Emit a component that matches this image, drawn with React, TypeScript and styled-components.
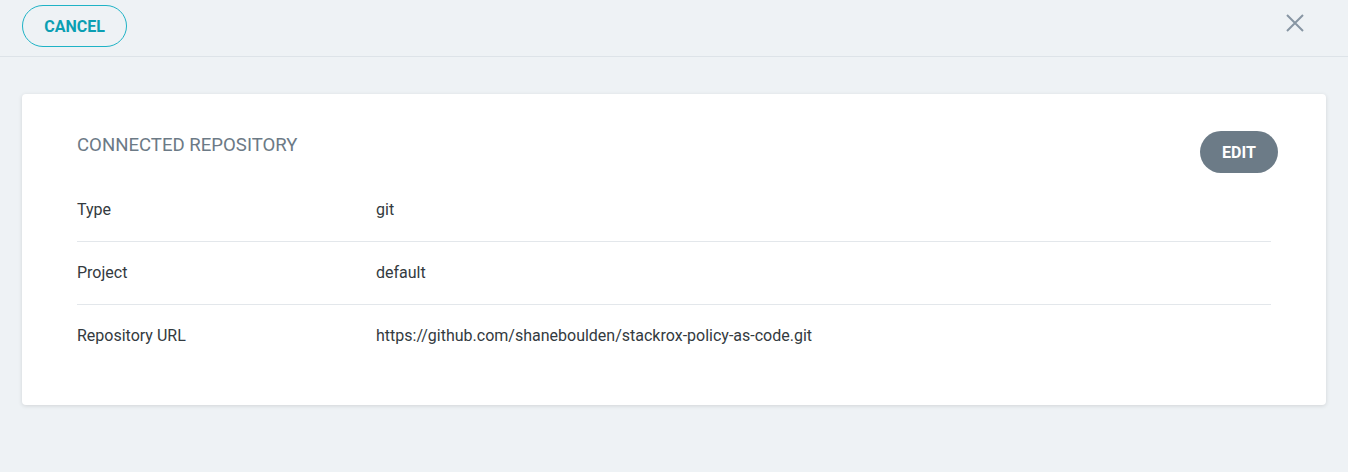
import React from "react";
import styled, { createGlobalStyle } from "styled-components";

const Global = createGlobalStyle`
  html, body { margin: 0; padding: 0; background: #eef2f5; }
  body { font-family: Roboto, "Noto Sans", sans-serif; }
`;

const Page = styled.div`
  width: 1348px;
  height: 472px;
  background: #eef2f5;
`;

const TopBar = styled.div`
  height: 57px;
  border-bottom: 1px solid #dde3e8;
  display: flex;
  align-items: center;
  justify-content: space-between;
  padding: 0 41px 0 22px;
  box-sizing: border-box;
`;

const OutlineButton = styled.button`
  height: 42px;
  width: 105px;
  margin-top: -4px;
  border-radius: 21px;
  border: 1px solid #1fb3c6;
  background: transparent;
  color: #0b9fb3;
  font-family: Roboto, sans-serif;
  font-size: 16px;
  font-weight: 700;
  cursor: pointer;
`;

const CloseButton = styled.button`
  border: 0;
  background: transparent;
  padding: 0;
  width: 24px;
  height: 24px;
  margin-top: -10px;
  display: flex;
  align-items: center;
  justify-content: center;
  color: #8796a3;
`;

const Body = styled.div`
  padding: 37px 22px 0;
`;

const Card = styled.div`
  background: #fff;
  border-radius: 4px;
  box-shadow: 0 1px 4px rgba(0, 0, 0, 0.12);
  padding: 37px 48px 38px 55px;
`;

const CardHeader = styled.div`
  display: flex;
  justify-content: space-between;
  align-items: flex-start;
  margin-bottom: 6px;
`;

const Title = styled.h2`
  margin: 0;
  padding-top: 1px;
  font-size: 18.6px;
  line-height: 26px;
  font-weight: 400;
  color: #6c7a86;
`;

const FilledButton = styled.button`
  height: 42px;
  width: 78px;
  border-radius: 21px;
  border: 0;
  background: #6c7b87;
  color: #fff;
  font-family: Roboto, sans-serif;
  font-size: 16px;
  font-weight: 700;
`;

const Rows = styled.div`
  margin-right: 7px;
`;

const Row = styled.div<{ $last?: boolean }>`
  display: grid;
  grid-template-columns: 299px 1fr;
  align-items: center;
  height: 60px;
  padding-bottom: 2px;
  border-bottom: ${(p) => (p.$last ? "0" : "1px solid #e3e7eb")};
  font-size: 16px;
  color: #333a40;
`;

const rows = [
  ["Type", "git"],
  ["Project", "default"],
  ["Repository URL", "https://github.com/shaneboulden/stackrox-policy-as-code.git"],
];

export default function App() {
  return (
    <Page>
      <Global />
      <TopBar>
        <OutlineButton>CANCEL</OutlineButton>
        <CloseButton aria-label="close">
          <svg width="18" height="18" viewBox="0 0 18 18">
            <path d="M1 1L17 17M17 1L1 17" stroke="#8796a3" strokeWidth="2" />
          </svg>
        </CloseButton>
      </TopBar>
      <Body>
        <Card>
          <CardHeader>
            <Title>CONNECTED REPOSITORY</Title>
            <FilledButton>EDIT</FilledButton>
          </CardHeader>
          <Rows>
            {rows.map(([k, v], i) => (
              <Row key={k} $last={i === rows.length - 1}>
                <span>{k}</span>
                <span>{v}</span>
              </Row>
            ))}
          </Rows>
        </Card>
      </Body>
    </Page>
  );
}
